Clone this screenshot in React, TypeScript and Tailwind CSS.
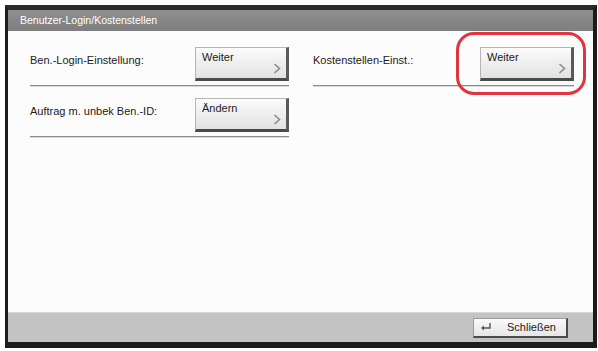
// Benutzer-Login/Kostenstellen settings panel (device touch screen).

const FONT = "font-['Liberation_Sans',Arial,sans-serif]";

type Row = { key: string; label: string; action: string };

const LEFT_ROWS: Row[] = [
  { key: "login", label: "Ben.-Login-Einstellung:", action: "Weiter" },
  { key: "unknown-id", label: "Auftrag m. unbek Ben.-ID:", action: "Ändern" },
];

const RIGHT_ROWS: Row[] = [{ key: "cost", label: "Kostenstellen-Einst.:", action: "Weiter" }];

function Chevron() {
  return (
    <svg width="8" height="11" viewBox="0 0 8 11" className="absolute bottom-[4px] right-[5px]">
      <path d="M1.5 1 L6.5 5.5 L1.5 10" fill="none" stroke="#8a8a8a" strokeWidth="1.6" />
    </svg>
  );
}

// A div, not a <button>: the device draws the caption in the top-left corner,
// and a native button centres its content vertically.
function NextButton({ text }: { text: string }) {
  return (
    <div
      role="button"
      className="relative h-[34px] w-[94px] cursor-pointer border border-[#b5b5b5] border-b-[3px] border-r-[3px] border-b-[#4a4a4a] border-r-[#5a5a5a] bg-gradient-to-b from-[#fbfbfb] to-[#e2e2e2] pl-[6px] pt-[3px] text-[11px] leading-[13px] text-[#1a1a1a]"
    >
      {text}
      <Chevron />
    </div>
  );
}

function SettingRow({ row, first }: { row: Row; first: boolean }) {
  return (
    <div className={first ? "" : "mt-[11px]"}>
      <div className="flex h-[34px] items-start justify-between">
        <span className="pt-[7px] text-[11px] leading-[13px] text-[#222]">{row.label}</span>
        <NextButton text={row.action} />
      </div>
      <div className="mt-[4px] h-[2px] border-t border-[#8c8c8c] bg-[#d8d8d8]" />
    </div>
  );
}

function ReturnIcon() {
  return (
    <svg width="12" height="10" viewBox="0 0 12 10">
      <path d="M10 1 V6 H3" fill="none" stroke="#555" strokeWidth="1.4" />
      <path d="M1 6 L4 3.5 V8.5 Z" fill="#555" />
    </svg>
  );
}

export default function App() {
  return (
    <div className={`relative h-[351px] w-[598px] bg-white pl-[5px] pt-[5px] ${FONT}`}>
      <div className="flex h-[343px] w-[592px] flex-col border-b-[6px] border-l-[3px] border-r-[4px] border-t-[5px] border-[#1c1c1c] border-t-[#2a2a2a]">
        <div className="flex h-[21px] items-center bg-gradient-to-b from-[#8f8f8f] to-[#7e7e7e] pl-[12px] text-[10.5px] text-white">
          Benutzer-Login/Kostenstellen
        </div>

        <div className="flex flex-1 gap-[24px] bg-[#fcfcfc] pl-[22px] pt-[16px]">
          <div className="w-[259px]">
            {LEFT_ROWS.map((row, i) => (
              <SettingRow key={row.key} row={row} first={i === 0} />
            ))}
          </div>
          <div className="w-[261px]">
            {RIGHT_ROWS.map((row, i) => (
              <SettingRow key={row.key} row={row} first={i === 0} />
            ))}
          </div>
        </div>

        <div className="flex h-[30px] items-center justify-end border-t border-[#d6d6d6] bg-[#c3c3c3] pr-[25px]">
          <button className="flex h-[20px] w-[95px] items-center border border-[#9a9a9a] border-b-[2px] border-r-[2px] border-b-[#4a4a4a] border-r-[#4a4a4a] bg-gradient-to-b from-[#fafafa] to-[#e6e6e6] pl-[6px] text-[11px] text-[#222]">
            <ReturnIcon />
            <span className="ml-[15px]">Schließen</span>
          </button>
        </div>
      </div>

      {/* red highlight ring drawn over the cost-centre button */}
      <div className="pointer-events-none absolute left-[456px] top-[32px] h-[63px] w-[130px] rounded-[18px] border-[3px] border-[#e0343e]" />
    </div>
  );
}
